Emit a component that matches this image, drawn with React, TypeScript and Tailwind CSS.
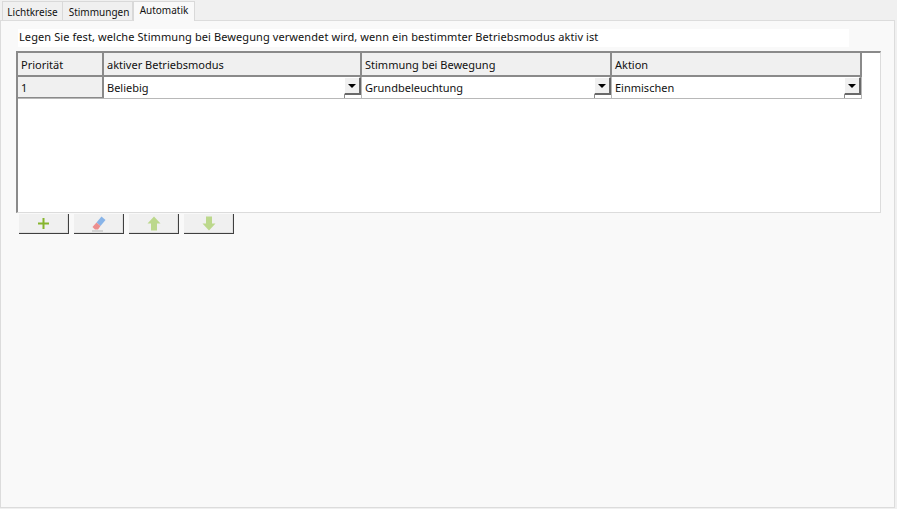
const font = "font-['Noto_Sans',sans-serif] text-[11px] text-[#111]";

function Arrow({ up }: { up: boolean }) {
  return (
    <svg width="14" height="15" viewBox="0 0 14 15" fill="#bcd88c">
      {up ? <path d="M7 0.5 L13.5 7.5 L10 7.5 L10 14.5 L4 14.5 L4 7.5 L0.5 7.5 Z" /> : <path d="M7 14.5 L13.5 7.5 L10 7.5 L10 0.5 L4 0.5 L4 7.5 L0.5 7.5 Z" />}
    </svg>
  );
}

function ToolButton({ children }: { children: React.ReactNode }) {
  return (
    <button className="w-[50px] h-[20px] flex items-center justify-center bg-[#f0f0f0] border-r border-b border-r-[#404040] border-b-[#404040] shadow-[inset_-1px_-1px_0_#e0e0e0]">
      {children}
    </button>
  );
}

function Header({ w, label }: { w: string; label: string }) {
  return <div className={`${w} h-full shrink-0 bg-[#f0f0f0] border-r-2 border-r-[#8a8a8a] pl-[3px] pt-[3px] flex items-center`}>{label}</div>;
}

function Cell({ w, label }: { w: string; label: string }) {
  return (
    <div className={`${w} h-full shrink-0 relative bg-white border-r border-r-[#b8b8b8] pl-[3px] pt-[2px] flex items-center`}>
      {label}
      <div className="absolute right-0 top-0 w-[17px] h-[18px] bg-[#f0f0f0] border-r-2 border-b-2 border-r-[#696969] border-b-[#696969] border-l border-t border-l-white border-t-white flex items-center justify-center">
        <div className="w-0 h-0 border-l-[4px] border-r-[4px] border-t-[4px] border-l-transparent border-r-transparent border-t-black" />
      </div>
      <div className="absolute right-[16px] top-[18px] w-px h-[3px] bg-[#8a8a8a]" />
    </div>
  );
}

export default function App() {
  return (
    <div className={`w-[897px] h-[509px] bg-[#f0f0f0] overflow-hidden flex flex-col ${font}`}>
      <div className="h-[20px] pl-[2px] flex items-end shrink-0 relative z-10 text-[10px]">
        <div className="h-[19px] w-[61px] pt-[2px] flex items-center justify-center bg-[#f0f0f0] border border-[#d9d9d9] border-b-0">Lichtkreise</div>
        <div className="h-[19px] w-[70px] pt-[2px] pl-[3px] flex items-center justify-center bg-[#f0f0f0] border-t border-r border-[#d9d9d9]">Stimmungen</div>
        <div className="h-[20px] w-[62px] -mb-px pb-[3px] flex items-center justify-center bg-[#f9f9f9] border border-[#d9d9d9] border-b-0">Automatik</div>
      </div>
      <div className="mr-[2px] mb-px w-[895px] flex-1 bg-[#f9f9f9] border border-[#dcdcdc] pt-[8px] pl-[15px] flex flex-col">
        <div className="ml-[2px] h-[18px] w-[831px] bg-white pl-[1px] pb-[2px] flex items-center tracking-[0.09px]">Legen Sie fest, welche Stimmung bei Bewegung verwendet wird, wenn ein bestimmter Betriebsmodus aktiv ist</div>
        <div className="mt-[4px] w-[865px] h-[162px] bg-white border-t-2 border-l-2 border-t-[#8a8a8a] border-l-[#8a8a8a] border-r border-b border-r-[#dcdcdc] border-b-[#dcdcdc]">
          <div className="h-[24px] flex border-b-2 border-b-[#8a8a8a] w-[844px]">
            <Header w="w-[86px]" label="Priorität" />
            <Header w="w-[258px]" label="aktiver Betriebsmodus" />
            <Header w="w-[250px]" label="Stimmung bei Bewegung" />
            <Header w="w-[250px]" label="Aktion" />
          </div>
          <div className="h-[22px] flex border-b border-b-[#b8b8b8] w-[844px]">
            <div className="w-[86px] h-full shrink-0 bg-[#f0f0f0] border-r-2 border-r-[#8a8a8a] border-b border-b-[#8a8a8a] pl-[3px] pt-[2px] flex items-center">1</div>
            <Cell w="w-[258px]" label="Beliebig" />
            <Cell w="w-[250px]" label="Grundbeleuchtung" />
            <Cell w="w-[250px]" label="Einmischen" />
          </div>
        </div>
        <div className="mt-[1px] ml-[3px] flex gap-[5px]">
          <ToolButton>
            <svg width="11" height="11" viewBox="0 0 11 11"><path d="M4.5 0 H6.5 V4.5 H11 V6.5 H6.5 V11 H4.5 V6.5 H0 V4.5 H4.5 Z" fill="#86b52d" /></svg>
          </ToolButton>
          <ToolButton>
            <svg width="14" height="16" viewBox="0 0 14 16">
              <path d="M9.5 0.5 L13.5 4 L8.5 10 L4.5 6.5 Z" fill="#88b4e8" />
              <path d="M4.5 6.5 L8.5 10 L6 13.5 L3 13.5 L0.5 11 Z" fill="#ec8f8f" />
              <rect x="0" y="14.5" width="11" height="1" fill="#b5b5b5" />
            </svg>
          </ToolButton>
          <ToolButton><Arrow up /></ToolButton>
          <ToolButton><Arrow up={false} /></ToolButton>
        </div>
      </div>
    </div>
  );
}
